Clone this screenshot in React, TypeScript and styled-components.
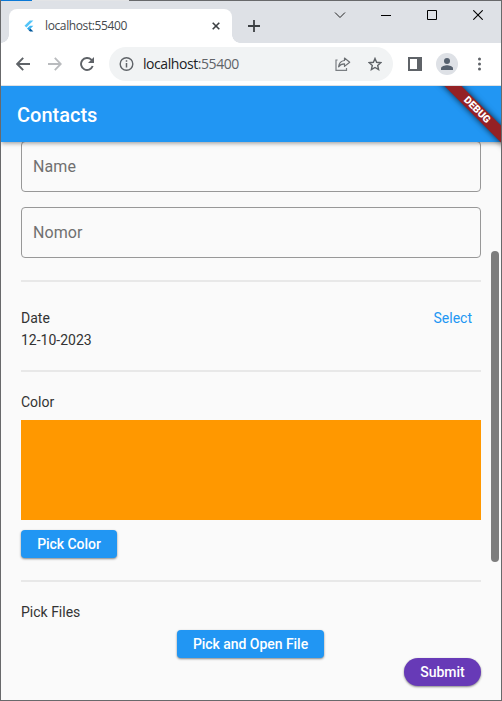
import React from "react";
import styled, { createGlobalStyle } from "styled-components";

const Global = createGlobalStyle`
  *, *::before, *::after { box-sizing: border-box; }
  html, body { margin: 0; padding: 0; overflow: hidden; }
  button { font: inherit; border: 0; padding: 0; background: none; color: inherit; cursor: pointer; }
`;

const Window = styled.div`
  width: 502px;
  height: 701px;
  display: flex;
  flex-direction: column;
  border: 1px solid #68696b;
  border-top: 0;
  background: #fafafa;
  overflow: hidden;
`;

const TopEdge = styled.div`
  flex: none;
  height: 1px;
  background: linear-gradient(90deg, #0a78d6 31px, #e3e4e6 31px, #e3e4e6 128px, #68696b 128px);
`;

const TabStrip = styled.header`
  flex: none;
  height: 42px;
  display: flex;
  background: #dee1e6;
`;

const Tab = styled.div`
  position: relative;
  width: 223px;
  height: 34px;
  margin: 8px 0 0 8px;
  padding: 0 10px 0 14px;
  display: flex;
  align-items: center;
  background: #fff;
  border-radius: 8px 8px 0 0;
  &::before, &::after {
    content: "";
    position: absolute;
    bottom: 0;
    width: 8px;
    height: 8px;
  }
  &::before { left: -8px; background: radial-gradient(circle at 0 0, transparent 7.5px, #fff 8px); }
  &::after { right: -8px; background: radial-gradient(circle at 100% 0, transparent 7.5px, #fff 8px); }
`;

const TabTitle = styled.span`
  flex: 1;
  margin-left: 8px;
  font: 12px/16px "Open Sans", sans-serif;
  letter-spacing: -0.38px;
  color: #45494d;
  white-space: nowrap;
`;

const IconButton = styled.button<{ $w: number; $h?: number }>`
  flex: none;
  width: ${(p) => p.$w}px;
  height: ${(p) => p.$h ?? 34}px;
  display: flex;
  align-items: center;
  justify-content: center;
  svg { display: block; }
`;

const NewTab = styled(IconButton)`
  margin: 8px 0 0 6px;
`;

const SidePanelButton = styled(IconButton)`
  padding-left: 1px;
`;

const WindowControls = styled.div`
  display: flex;
  margin-left: auto;
`;

const Toolbar = styled.nav`
  flex: none;
  height: 43px;
  display: flex;
  align-items: center;
  padding: 0 0 1px 6px;
  background: #fff;
  border-bottom: 1px solid #dfe1e4;
`;

const AddressBar = styled.div`
  width: 284px;
  height: 34px;
  margin-left: 6px;
  display: flex;
  align-items: center;
  padding: 0 2px 0 10px;
  border-radius: 17px;
  background: #f1f3f4;
`;

const Url = styled.span`
  flex: 1;
  margin-left: 9px;
  font: 14px/18px "Open Sans", sans-serif;
  letter-spacing: -0.43px;
  color: #202124;
  white-space: nowrap;
  span { color: #5f6368; }
`;

const Avatar = styled.div`
  flex: none;
  width: 22px;
  height: 22px;
  border-radius: 50%;
  background: #dee1e6;
  display: flex;
  align-items: center;
  justify-content: center;
`;

const Page = styled.div`
  position: relative;
  flex: 1;
  min-height: 0;
  display: flex;
  flex-direction: column;
  overflow: hidden;
  font-family: Roboto, sans-serif;
`;

const AppBar = styled.div`
  flex: none;
  z-index: 1;
  height: 56px;
  padding: 0 16px;
  display: flex;
  align-items: center;
  background: #2196f3;
  box-shadow: 0 2px 4px -1px rgba(0, 0, 0, 0.2), 0 1px 5px rgba(0, 0, 0, 0.25);
`;

const AppTitle = styled.h1`
  margin: 2px 0 0;
  font-size: 20px;
  line-height: 24px;
  font-weight: 500;
  letter-spacing: 0;
  color: #fff;
`;

const DebugBanner = styled.div`
  position: absolute;
  z-index: 2;
  left: 426px;
  top: 18px;
  width: 100px;
  height: 12px;
  transform: rotate(45deg);
  display: flex;
  align-items: center;
  justify-content: center;
  background: #942125;
  box-shadow: 0 0 6px rgba(0, 0, 0, 0.75);
  font-size: 10.2px;
  line-height: 12px;
  font-weight: 900;
  color: #fff;
`;

const ScrollThumb = styled.div`
  position: absolute;
  z-index: 1;
  right: 2px;
  top: 165px;
  width: 8px;
  height: 311px;
  border-radius: 4px;
  background: #7d7d7d;
`;

const Form = styled.main`
  flex: 1;
  min-height: 0;
  display: flex;
  flex-direction: column;
  margin-top: -1px;
  padding: 0 20px;
  font-size: 14px;
  line-height: 16px;
  color: #333;
`;

const Field = styled.div`
  flex: none;
  height: 51px;
  margin-bottom: 15px;
  padding: 0 11px;
  display: flex;
  align-items: center;
  border: 1px solid #989898;
  border-radius: 4px;
  font-size: 16px;
  letter-spacing: 0.1px;
  color: #707070;
`;

const Divider = styled.hr`
  flex: none;
  width: 100%;
  height: 2px;
  margin: 0;
  border: 0;
  background: #e8e8e8;
`;

const FirstDivider = styled(Divider)`
  margin-top: 7px;
`;

const DateRow = styled.section`
  flex: none;
  height: 88px;
  display: flex;
  justify-content: space-between;
  padding: 28px 9px 0 0;
`;

const DateText = styled.div`
  display: flex;
  flex-direction: column;
  gap: 6px;
`;

const SelectButton = styled.button`
  height: 16px;
  color: #2196f3;
`;

const Section = styled.section<{ $h?: number }>`
  flex: none;
  height: ${(p) => (p.$h ? p.$h + "px" : "auto")};
  display: flex;
  flex-direction: column;
  padding-top: 22px;
`;

const Swatch = styled.div`
  height: 100px;
  margin: 10px 0;
  background: #ff9800;
`;

const RaisedButton = styled.button<{ $w: number; $tone?: "submit"; $align?: string }>`
  flex: none;
  width: ${(p) => p.$w}px;
  height: 28px;
  align-self: ${(p) => p.$align ?? "flex-start"};
  border-radius: ${(p) => (p.$tone ? "14px" : "4px")};
  background: ${(p) => (p.$tone ? "#673ab7" : "#2196f3")};
  color: #fff;
  font-weight: 500;
  letter-spacing: -0.04px;
  box-shadow: 0 1px 2px rgba(0, 0, 0, 0.35), 0 1px 3px rgba(0, 0, 0, 0.15);
`;

const FileButton = styled(RaisedButton)`
  margin: 10px 1px 0 0;
`;

const FlutterLogo = () => (
  <svg width="14" height="14" viewBox="0 0 14 14">
    <path d="M6.8 1.6H10.4L3.4 8.6 1.5 6.8z" fill="#54c5f8" />
    <path d="M6.9 6.7H10.4L7.4 9.7 5.6 8z" fill="#40b8f4" />
    <path d="M4 9.6 5.7 7.9 7.4 9.6 5.7 11.3z" fill="#29a8ee" />
    <path d="M5.7 11.3 7.4 9.6 10.4 12.6H7z" fill="#01579b" />
  </svg>
);

const stroke = (color: string, width = 1) => ({ fill: "none", stroke: color, strokeWidth: width });

export default function App() {
  return (
    <>
      <Global />
      <Window>
        <TopEdge />
        <TabStrip>
          <Tab>
            <FlutterLogo />
            <TabTitle>localhost:55400</TabTitle>
            <IconButton $w={12} aria-label="Close tab">
              <svg width="8" height="8" viewBox="0 0 8 8">
                <path d="M.7.7l6.6 6.6M7.3.7L.7 7.3" {...stroke("#3c4043", 1.6)} />
              </svg>
            </IconButton>
          </Tab>
          <NewTab $w={32} aria-label="New tab">
            <svg width="12" height="12" viewBox="0 0 12 12">
              <path d="M6 0v12M0 6h12" {...stroke("#3c4043", 1.8)} />
            </svg>
          </NewTab>
          <WindowControls>
            <IconButton $w={46} $h={28} aria-label="Search tabs">
              <svg width="12" height="8" viewBox="0 0 12 8">
                <path d="M1 1.5l5 5 5-5" {...stroke("#222")} />
              </svg>
            </IconButton>
            <IconButton $w={46} $h={28} aria-label="Minimize">
              <svg width="10" height="10" viewBox="0 0 10 10">
                <path d="M0 5.5h10" {...stroke("#000")} />
              </svg>
            </IconButton>
            <IconButton $w={46} $h={28} aria-label="Maximize">
              <svg width="10" height="10" viewBox="0 0 10 10">
                <path d="M.5.5h9v9h-9z" {...stroke("#000")} />
              </svg>
            </IconButton>
            <IconButton $w={46} $h={28} aria-label="Close">
              <svg width="10" height="10" viewBox="0 0 10 10">
                <path d="M.3.3l9.4 9.4M9.7.3L.3 9.7" {...stroke("#000", 1.1)} />
              </svg>
            </IconButton>
          </WindowControls>
        </TabStrip>
        <Toolbar>
          <IconButton $w={32} aria-label="Back">
            <svg width="14" height="14" viewBox="0 0 14 14">
              <path d="M14 7H1.5M7.2.8L1.2 7l6 6.2" {...stroke("#5f6368", 1.9)} />
            </svg>
          </IconButton>
          <IconButton $w={32} aria-label="Forward">
            <svg width="14" height="14" viewBox="0 0 14 14">
              <path d="M0 7h12.5M6.8.8l6 6.2-6 6.2" {...stroke("#b9bbbe", 1.8)} />
            </svg>
          </IconButton>
          <IconButton $w={32} aria-label="Reload">
            <svg width="14" height="14" viewBox="0 0 14 14">
              <path d="M12.7 9A6 6 0 1 1 11.3 2.7L12.6 4" {...stroke("#5f6368", 1.9)} />
              <path d="M14 0v6H8z" fill="#5f6368" />
            </svg>
          </IconButton>
          <AddressBar>
            <svg width="15" height="14" viewBox="0 0 15 14">
              <circle cx="7.5" cy="7" r="6.3" {...stroke("#5f6368", 1.4)} />
              <path d="M7.5 6v4.5M7.5 3.3v1.5" {...stroke("#5f6368", 1.5)} />
            </svg>
            <Url>
              localhost<span>:55400</span>
            </Url>
            <IconButton $w={32} aria-label="Share">
              <svg width="16" height="14" viewBox="0 0 16 14">
                <path d="M2.6 3H1v10.3h10.5V11" {...stroke("#7a7e82", 1.2)} />
                <path d="M9.5 1l5.2 4.2-5.2 4.2V6.8C6.7 6.7 5 7.7 3.6 9.8 4 6.2 6 3.9 9.5 3.5z" strokeLinejoin="round" {...stroke("#6b6f73", 1.2)} />
              </svg>
            </IconButton>
            <IconButton $w={32} aria-label="Bookmark">
              <svg width="14" height="14" viewBox="0 0 14 14">
                <path d="M7 1.5l1.6 3.8 4.2.4-3.1 2.8.9 4.1L7 10.5l-3.6 2.1.9-4.1-3.1-2.8 4.2-.4z" {...stroke("#5f6368", 1.4)} />
              </svg>
            </IconButton>
          </AddressBar>
          <SidePanelButton $w={43} aria-label="Side panel">
            <svg width="14" height="14" viewBox="0 0 14 14">
              <path d="M0 0h14v14H0zM2 2v10h7V2z" fill="#5f6368" fillRule="evenodd" />
            </svg>
          </SidePanelButton>
          <IconButton $w={22} aria-label="Profile">
            <Avatar>
              <svg width="12" height="12" viewBox="0 0 12 12" fill="#56616f">
                <circle cx="6" cy="3" r="3" />
                <path d="M0 12v-1.8C0 8.2 4 7.2 6 7.2s6 1 6 3V12z" />
              </svg>
            </Avatar>
          </IconButton>
          <IconButton $w={43} aria-label="Menu">
            <svg width="3" height="14" viewBox="0 0 3 14" fill="#5f6368">
              <circle cx="1.5" cy="2" r="1.5" />
              <circle cx="1.5" cy="7" r="1.5" />
              <circle cx="1.5" cy="12" r="1.5" />
            </svg>
          </IconButton>
        </Toolbar>
        <Page>
          <AppBar>
            <AppTitle>Contacts</AppTitle>
          </AppBar>
          <DebugBanner>DEBUG</DebugBanner>
          <Form>
            <Field>Name</Field>
            <Field>Nomor</Field>
            <FirstDivider />
            <DateRow>
              <DateText>
                <span>Date</span>
                <span>12-10-2023</span>
              </DateText>
              <SelectButton>Select</SelectButton>
            </DateRow>
            <Divider />
            <Section $h={208}>
              <span>Color</span>
              <Swatch />
              <RaisedButton $w={96}>Pick Color</RaisedButton>
            </Section>
            <Divider />
            <Section>
              <span>Pick Files</span>
              <FileButton $w={147} $align="center">Pick and Open File</FileButton>
              <RaisedButton $w={77} $tone="submit" $align="flex-end">Submit</RaisedButton>
            </Section>
          </Form>
          <ScrollThumb />
        </Page>
      </Window>
    </>
  );
}
